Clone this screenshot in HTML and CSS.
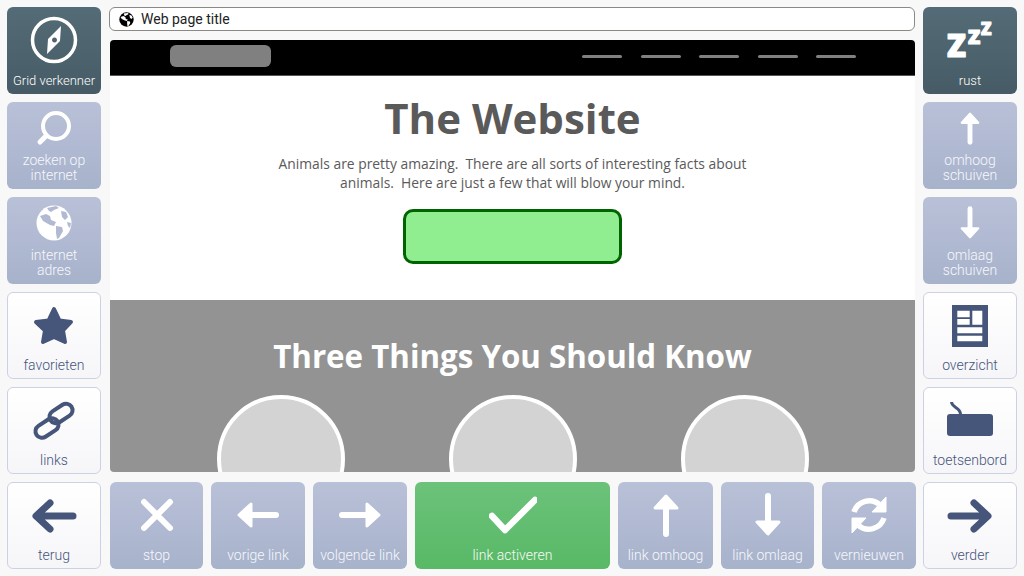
FILE: index.html
```html
<!DOCTYPE html>
<html lang="en">
<head>
    <meta charset="UTF-8">
    <meta name="viewport" content="width=device-width, initial-scale=1.0">
    <title>Grid browser</title>
    <link rel="stylesheet" href="styles.css">
</head>
<body>
    <div class="app">
        <!-- Left column -->
        <div class="column">
            <div class="tile dark">
                <div class="icon">
                    <svg width="48" height="48" viewBox="0 0 48 48">
                        <circle cx="24" cy="24" r="21.5" fill="none" stroke="#fff" stroke-width="3.5"/>
                        <path fill="#fff" fill-rule="evenodd" d="M31 10 L18 23 L17 38 L30 25 Z M24.5 21.5 a2.5 2.5 0 1 0 0.01 0 Z"/>
                    </svg>
                </div>
                <span class="label">Grid verkenner</span>
            </div>
            <div class="tile blue">
                <div class="icon">
                    <svg width="48" height="48" viewBox="0 0 48 48" fill="none" stroke="#fff">
                        <circle cx="26" cy="22" r="13" stroke-width="4"/>
                        <path d="M16 32 L10 38" stroke-width="5" stroke-linecap="round"/>
                    </svg>
                </div>
                <span class="label">zoeken op<br>internet</span>
            </div>
            <div class="tile blue">
                <div class="icon">
                    <svg width="48" height="48" viewBox="0 0 48 48">
                        <circle cx="24" cy="24" r="17.5" fill="#fff"/>
                        <path fill="#b1bad2" d="M17 9 L26 7 L29 9 L24 11 L21 13 L19 12 Z M10 17 L16 15 L20 17 L21 21 L26 23 L24 27 L20 26 L13 22 Z M26 27 L32 28 L33 32 L29 39 L27 40 L26 34 Z M31 12 L36 13 L38 18 L35 21 L32 18 Z M37 23 L41 24 L40 29 L38 27 Z"/>
                    </svg>
                </div>
                <span class="label">internet<br>adres</span>
            </div>
            <div class="tile light">
                <div class="icon">
                    <svg width="48" height="48" viewBox="0 0 48 48">
                        <path fill="#46557a" stroke="#46557a" stroke-width="4" stroke-linejoin="round" d="M24 7 L29.5 18.5 L41 20 L33 28.5 L35 40 L24 35 L13 40 L15 28.5 L6 20 L18.5 18.5 Z"/>
                    </svg>
                </div>
                <span class="label">favorieten</span>
            </div>
            <div class="tile light">
                <div class="icon">
                    <svg width="48" height="48" viewBox="0 0 48 48" fill="none" stroke="#46557a" stroke-width="4">
                        <rect x="18.5" y="10" width="25" height="13" rx="6.5" transform="rotate(-33 31 16.5)"/>
                        <rect x="4.5" y="24.5" width="25" height="13" rx="6.5" transform="rotate(-33 17 31)"/>
                    </svg>
                </div>
                <span class="label">links</span>
            </div>
            <div class="tile light">
                <div class="icon">
                    <svg width="48" height="48" viewBox="0 0 48 48" fill="none" stroke="#46557a" stroke-width="7" stroke-linecap="round" stroke-linejoin="round">
                        <path d="M43 24 H7 M20 11 L6 24 L20 37"/>
                    </svg>
                </div>
                <span class="label">terug</span>
            </div>
        </div>

        <!-- Middle: title bar, web page and bottom buttons -->
        <div class="middle">
            <div class="titlebar">
                <svg width="15" height="15" viewBox="0 0 48 48">
                    <circle cx="24" cy="24" r="23" fill="#000"/>
                    <path fill="#fff" d="M15 5 L28 3 L31 6 L24 10 L20 13 L17 11 Z M5 16 L14 13 L20 16 L22 22 L28 24 L25 29 L19 27 L9 22 Z M26 29 L35 30 L36 35 L30 45 L27 45 L26 37 Z M33 9 L40 11 L44 18 L39 22 L35 18 Z"/>
                </svg>
                <span>Web page title</span>
            </div>
            <div class="webpage">
                <div class="site-header">
                    <div class="site-logo"></div>
                    <div class="site-nav">
                        <span></span><span></span><span></span><span></span><span></span>
                    </div>
                </div>
                <div class="hero">
                    <h1>The Website</h1>
                    <p>Animals are pretty amazing.&nbsp; There are all sorts of interesting facts about<br>animals.&nbsp; Here are just a few that will blow your mind.</p>
                    <div class="cta"></div>
                </div>
                <div class="things">
                    <h2>Three Things You Should Know</h2>
                    <div class="circles">
                        <div class="circle"></div>
                        <div class="circle"></div>
                        <div class="circle"></div>
                    </div>
                </div>
            </div>
            <div class="bottom-row">
                <div class="tile blue">
                    <div class="icon">
                        <svg width="48" height="48" viewBox="0 0 48 48" fill="none" stroke="#fff" stroke-width="6" stroke-linecap="round">
                            <path d="M11 11 L37 37 M37 11 L11 37"/>
                        </svg>
                    </div>
                    <span class="label">stop</span>
                </div>
                <div class="tile blue">
                    <div class="icon">
                        <svg width="48" height="48" viewBox="0 0 48 48">
                            <path d="M17 24 H42" stroke="#fff" stroke-width="6" stroke-linecap="round"/>
                            <path d="M5 24 L17 13 V35 Z" fill="#fff" stroke="#fff" stroke-width="3" stroke-linejoin="round"/>
                        </svg>
                    </div>
                    <span class="label">vorige link</span>
                </div>
                <div class="tile blue">
                    <div class="icon">
                        <svg width="48" height="48" viewBox="0 0 48 48">
                            <path d="M31 24 H6" stroke="#fff" stroke-width="6" stroke-linecap="round"/>
                            <path d="M43 24 L31 13 V35 Z" fill="#fff" stroke="#fff" stroke-width="3" stroke-linejoin="round"/>
                        </svg>
                    </div>
                    <span class="label">volgende link</span>
                </div>
                <div class="tile green">
                    <div class="icon">
                        <svg width="48" height="48" viewBox="0 0 48 48" fill="none" stroke="#fff" stroke-width="6.5" stroke-linecap="round" stroke-linejoin="round">
                            <path d="M3 25 L16 39 L46 9"/>
                        </svg>
                    </div>
                    <span class="label">link activeren</span>
                </div>
                <div class="tile blue">
                    <div class="icon">
                        <svg width="48" height="48" viewBox="0 0 48 48">
                            <path d="M24 17 V43" stroke="#fff" stroke-width="6" stroke-linecap="round"/>
                            <path d="M24 5 L13 17 H35 Z" fill="#fff" stroke="#fff" stroke-width="3" stroke-linejoin="round"/>
                        </svg>
                    </div>
                    <span class="label">link omhoog</span>
                </div>
                <div class="tile blue">
                    <div class="icon">
                        <svg width="48" height="48" viewBox="0 0 48 48">
                            <path d="M24 31 V5" stroke="#fff" stroke-width="6" stroke-linecap="round"/>
                            <path d="M24 43 L13 31 H35 Z" fill="#fff" stroke="#fff" stroke-width="3" stroke-linejoin="round"/>
                        </svg>
                    </div>
                    <span class="label">link omlaag</span>
                </div>
                <div class="tile blue">
                    <div class="icon">
                        <svg width="48" height="48" viewBox="0 0 48 48">
                            <path d="M9 21 A16 16 0 0 1 35 14" fill="none" stroke="#fff" stroke-width="5.5"/>
                            <path d="M41 6 V21 H27 Z" fill="#fff" stroke="#fff" stroke-width="1" stroke-linejoin="round"/>
                            <path d="M39 27 A16 16 0 0 1 13 34" fill="none" stroke="#fff" stroke-width="5.5"/>
                            <path d="M7 42 V27 H21 Z" fill="#fff" stroke="#fff" stroke-width="1" stroke-linejoin="round"/>
                        </svg>
                    </div>
                    <span class="label">vernieuwen</span>
                </div>
            </div>
        </div>

        <!-- Right column -->
        <div class="column">
            <div class="tile dark">
                <div class="icon">
                    <svg width="48" height="48" viewBox="0 0 48 48" class="zzz">
                        <text x="1" y="41" font-size="31">Z</text>
                        <text x="22" y="28" font-size="20">Z</text>
                        <text x="35" y="19" font-size="17">Z</text>
                    </svg>
                </div>
                <span class="label">rust</span>
            </div>
            <div class="tile blue">
                <div class="icon">
                    <svg width="36" height="36" viewBox="0 0 48 48">
                        <path d="M24 17 V43" stroke="#fff" stroke-width="6.5" stroke-linecap="round"/>
                        <path d="M24 5 L13 17 H35 Z" fill="#fff" stroke="#fff" stroke-width="3" stroke-linejoin="round"/>
                    </svg>
                </div>
                <span class="label">omhoog<br>schuiven</span>
            </div>
            <div class="tile blue">
                <div class="icon">
                    <svg width="36" height="36" viewBox="0 0 48 48">
                        <path d="M24 31 V5" stroke="#fff" stroke-width="6.5" stroke-linecap="round"/>
                        <path d="M24 43 L13 31 H35 Z" fill="#fff" stroke="#fff" stroke-width="3" stroke-linejoin="round"/>
                    </svg>
                </div>
                <span class="label">omlaag<br>schuiven</span>
            </div>
            <div class="tile light">
                <div class="icon">
                    <svg width="48" height="48" viewBox="0 0 48 48">
                        <rect x="6" y="3" width="36" height="42" fill="#46557a"/>
                        <path fill="#fff" d="M11.3 8.7 H23.7 V15.3 H11.3 Z M11.3 17 H23.7 V22.7 H11.3 Z M26.3 8.7 H36.3 V22.7 H26.3 Z M11.3 25.3 H36.3 V31.3 H11.3 Z M11.3 33.7 H36.3 V39.3 H11.3 Z"/>
                    </svg>
                </div>
                <span class="label">overzicht</span>
            </div>
            <div class="tile light">
                <div class="icon">
                    <svg width="48" height="48" viewBox="0 0 48 48">
                        <path d="M5.5 5 C6 11 14 10 14.5 17" fill="none" stroke="#46557a" stroke-width="3"/>
                        <rect x="1" y="17" width="46" height="22" rx="3" fill="#46557a"/>
                    </svg>
                </div>
                <span class="label">toetsenbord</span>
            </div>
            <div class="tile light">
                <div class="icon">
                    <svg width="48" height="48" viewBox="0 0 48 48" fill="none" stroke="#46557a" stroke-width="7" stroke-linecap="round" stroke-linejoin="round">
                        <path d="M5 24 H41 M28 11 L42 24 L28 37"/>
                    </svg>
                </div>
                <span class="label">verder</span>
            </div>
        </div>
    </div>
</body>
</html>
```

FILE: styles.css
```css
html, body {
    margin: 0;
    padding: 0;
    height: 100%;
}

body {
    background: #f8f8f8;
    font-family: 'Roboto', 'Liberation Sans', sans-serif;
    overflow: hidden;
}

.app {
    display: grid;
    grid-template-columns: 94px 1fr 94px;
    grid-template-rows: 562px;
    column-gap: 8px;
    height: 576px;
    padding: 7px;
    box-sizing: border-box;
}

.column {
    display: grid;
    grid-template-rows: repeat(6, 87px);
    row-gap: 8px;
}

/* Tiles */
.tile {
    display: flex;
    flex-direction: column;
    align-items: center;
    border-radius: 6px;
    box-sizing: border-box;
    padding-bottom: 6px;
    overflow: hidden;
    text-align: center;
}

.icon {
    flex: 1;
    display: flex;
    align-items: center;
    justify-content: center;
    min-height: 0;
}

.label {
    font-size: 14px;
    font-weight: 300;
    line-height: 15px;
    white-space: nowrap;
}

.dark {
    background: linear-gradient(#546c77, #465b65);
    color: #fff;
}

.dark .label {
    font-size: 13px;
}

.blue {
    background: linear-gradient(#b9c1d8, #a7b2cb);
    color: #f7f8fc;
}

.light {
    background: linear-gradient(#ffffff, #f6f6f9);
    border: 1px solid #ccd2e6;
    padding-bottom: 5px;
    color: #46557a;
}

.green {
    background: linear-gradient(#6cc27a, #58b966);
    color: #f7faf7;
}

.zzz {
    overflow: visible;
}

.zzz text {
    font-family: 'Open Sans', sans-serif;
    font-weight: 800;
    fill: #fff;
    stroke: #fff;
    stroke-width: 1.2;
    stroke-linejoin: round;
}

/* Middle */
.middle {
    display: flex;
    flex-direction: column;
    min-width: 0;
    min-height: 0;
}

.titlebar {
    display: flex;
    align-items: center;
    gap: 7px;
    height: 24px;
    flex-shrink: 0;
    box-sizing: border-box;
    padding-left: 9px;
    background: #fff;
    border: 1px solid #8a8a84;
    border-radius: 6px;
    font-size: 14px;
    color: #222;
}

.webpage {
    flex: 1;
    margin: 9px 0 10px 1px;
    background: #fff;
    border-radius: 4px;
    overflow: hidden;
    min-height: 0;
    display: flex;
    flex-direction: column;
    font-family: 'Open Sans', 'Noto Sans', sans-serif;
}

.site-header {
    display: flex;
    align-items: center;
    justify-content: space-between;
    flex-shrink: 0;
    height: 36px;
    padding: 0 59px 0 60px;
    background: #000;
    border-bottom: 1px solid #555;
    box-sizing: border-box;
}

.site-logo {
    width: 101px;
    height: 22px;
    margin-top: -3px;
    background: #808080;
    border-radius: 6px;
}

.site-nav {
    display: flex;
    gap: 18.5px;
    margin-top: -3px;
}

.site-nav span {
    display: block;
    width: 40px;
    height: 3px;
    background: #808080;
    border-radius: 2px;
}

.hero {
    height: 224px;
    flex-shrink: 0;
    display: flex;
    flex-direction: column;
    align-items: center;
    text-align: center;
    color: #5a5a5a;
}

.hero h1 {
    margin: 14px 0 0;
    font-size: 42px;
    line-height: 56px;
    font-weight: 700;
}

.hero p {
    margin: 8px 0 0;
    font-size: 13.85px;
    line-height: 19px;
}

.cta {
    width: 219px;
    height: 55px;
    margin-top: 17px;
    box-sizing: border-box;
    background: #90ee90;
    border: 3px solid #006400;
    border-radius: 10px;
}

.things {
    flex: 1;
    min-height: 0;
    background: #939393;
    text-align: center;
    overflow: hidden;
}

.things h2 {
    margin: 34px 0 0;
    font-size: 31.3px;
    line-height: 44px;
    font-weight: 700;
    color: #fff;
}

.circles {
    display: flex;
    justify-content: center;
    gap: 104px;
    margin-top: 17px;
}

.circle {
    flex-shrink: 0;
    width: 128px;
    height: 128px;
    box-sizing: border-box;
    background: #d3d3d3;
    border: 4px solid #fff;
    border-radius: 50%;
}

.bottom-row {
    display: grid;
    grid-template-columns: 93px 94px 94px 195px 95px 93px 94px;
    column-gap: 8px;
    height: 87px;
    flex-shrink: 0;
    margin-left: 1px;
}
```
